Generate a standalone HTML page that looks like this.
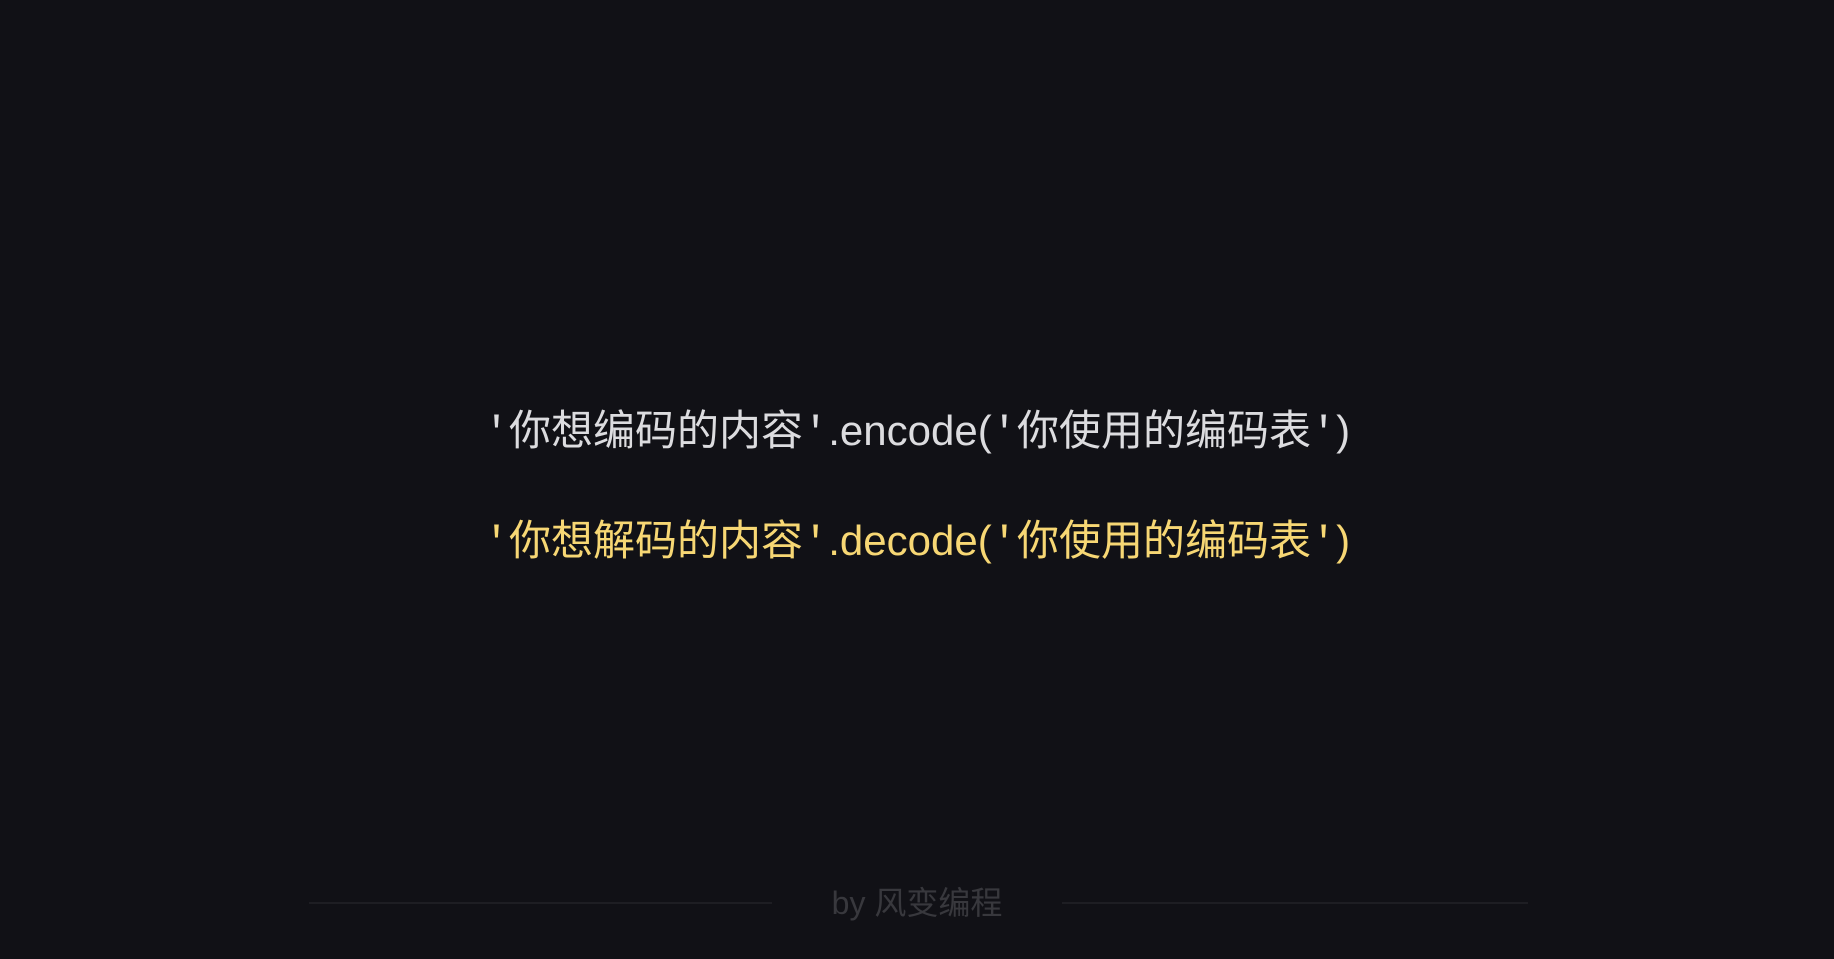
<!DOCTYPE html>
<html><head><meta charset="utf-8"><style>
html,body{margin:0;padding:0;background:#111116;width:1834px;height:959px;overflow:hidden}
.l{position:absolute;left:0;width:1834px;text-align:center;font-family:"Liberation Sans","Noto Sans CJK SC",sans-serif;font-size:42px;white-space:nowrap}
.q{font-family:"Liberation Mono",monospace;}
#a{top:397px;color:#dcdcdf}
#b{top:507px;color:#f7d774}
.hr{position:absolute;top:902px;height:2px;background:#1e1e23}
#f{position:absolute;top:878px;left:0;width:1834px;text-align:center;font-family:"Liberation Sans","Noto Sans CJK SC",sans-serif;font-size:32px;color:#38383d}
</style></head><body>
<div class="l" id="a"><span class="q">'</span>你想编码的内容<span class="q">'</span>.encode(<span class="q">'</span>你使用的编码表<span class="q">'</span>)</div>
<div class="l" id="b"><span class="q">'</span>你想解码的内容<span class="q">'</span>.decode(<span class="q">'</span>你使用的编码表<span class="q">'</span>)</div>
<div class="hr" style="left:309px;width:463px"></div>
<div class="hr" style="left:1062px;width:466px"></div>
<div id="f">by 风变编程</div>
</body></html>
